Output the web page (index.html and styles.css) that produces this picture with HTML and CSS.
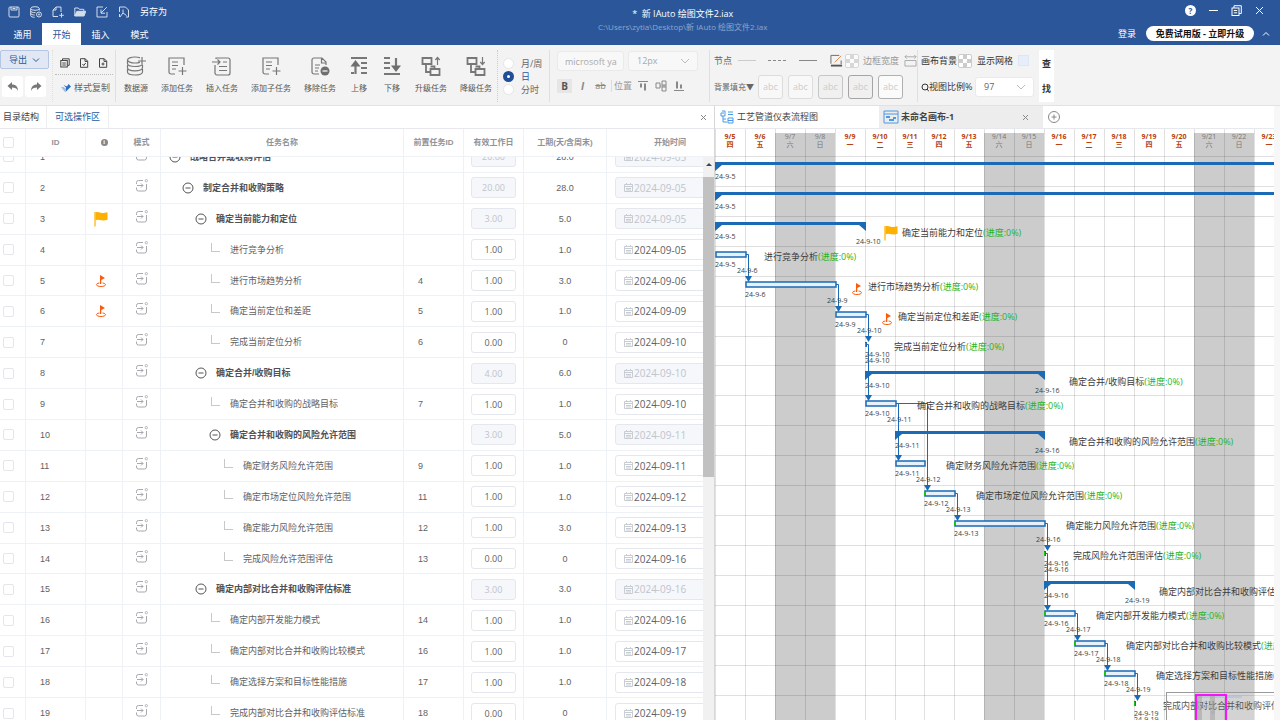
FILE: index.html
```
<!DOCTYPE html>
<html lang="zh-CN">
<head>
  <meta charset="UTF-8" />
  <meta name="viewport" content="width=device-width, initial-scale=1" />
  <title>新 IAuto 绘图文件2.iax</title>
  <link rel="stylesheet" href="styles.css">
</head>
<body>
  <header class="titlebar">
    <div class="title-left">
      <div class="quick">
        <button aria-label="保存"><svg viewBox="0 0 12 12"><rect x="1" y="1" width="10" height="10" rx="1"/><path d="M3 1v3h6V1M4.500 2.500h3"/></svg></button>
        <button aria-label="数据源设置"><svg viewBox="0 0 12 12"><ellipse cx="5" cy="2.500" rx="4.300" ry="1.800"/><path d="M.7 2.500v7c0 1 1.800 1.800 4 1.800M9.300 2.500v2M.7 5c0 1 2 1.800 4.800 1.600M.7 7.300c0 1 1.800 1.700 4 1.700"/><circle cx="9" cy="8.500" r="2.500"/><circle cx="9" cy="8.500" r=".7"/></svg></button>
        <button aria-label="新建"><svg viewBox="0 0 12 12"><path d="M6 10.500H1V4l3-3h5v5M4 1v3H1M9.500 7v4.500M7.200 9.300h4.600"/></svg></button>
        <button aria-label="打开"><svg viewBox="0 0 12 12"><path d="M.8 10V2h3.500l1 1.300h4.500V5" /><path class="solid" d="M.8 10 2.800 5.300h9L10 10z"/></svg></button>
        <button aria-label="导入"><svg viewBox="0 0 12 12"><path d="M7 1H1v10h10V6M10.800 1.200 5 7M5 3.500V7.200h4"/></svg></button>
        <button aria-label="导出PDF"><svg viewBox="0 0 12 12"><path d="M1.500 6V1h6l3 3v7H8M5 3.500v3.300L2 11M5 7l3.500 2.500M1.500 8v3"/></svg></button>
        <a href="#">另存为</a>
      </div>
      <nav class="menu">
        <a href="#">通用</a><a href="#" class="active">开始</a><a href="#">插入</a><a href="#">模式</a>
      </nav>
    </div>
    <div class="title-center">
      <div class="doc-name">*&nbsp; 新 IAuto 绘图文件2.iax</div>
      <div class="doc-path">C:\Users\zytia\Desktop\新 IAuto 绘图文件2.iax</div>
    </div>
    <div class="title-right">
      <div class="win">
        <button class="help" aria-label="帮助">?</button>
        <button aria-label="最小化"><svg viewBox="0 0 11 11"><path d="M1 5.500h9"/></svg></button>
        <button aria-label="还原"><svg viewBox="0 0 11 11"><rect x="1" y="3" width="7" height="7.500"/><path d="M3 3V.7h7.300V8.500H8M2.800 5.500h3.400M2.800 7.800h3.400"/></svg></button>
        <button aria-label="关闭"><svg viewBox="0 0 11 11"><path d="M2 2l7 7M9 2 2 9"/></svg></button>
      </div>
      <div class="account">
        <a href="#">登录</a>
        <button class="pill">免费试用版 - 立即升级</button>
        <button class="fold" aria-label="收起"><svg viewBox="0 0 8 8"><path d="M1 5.500 4 2.500l3 3"/></svg></button>
      </div>
    </div>
  </header>

  <div class="ribbon">
    <div class="group g-export">
      <button class="export">导出 <svg viewBox="0 0 8 8"><path d="M1 2.500 4 5.500l3-3"/></svg></button>
      <div class="history">
        <button aria-label="撤销"><svg viewBox="0 0 12 12"><path d="M5 1 .5 5 5 9V6.500c3 0 5 .5 6 3.500 0-4-2-6.500-6-6.500z"/></svg></button>
        <button aria-label="重做"><svg viewBox="0 0 12 12"><path d="M7 1l4.500 4L7 9V6.500c-3 0-5 .5-6 3.500 0-4 2-6.500 6-6.500z"/></svg></button>
      </div>
    </div>
    <div class="group g-clip">
      <div class="clip-icons">
        <button aria-label="复制"><svg viewBox="0 0 10 10"><rect x=".8" y="2.500" width="6.500" height="6.500"/><path d="M2.500 2.500V.8h6.700v6.500H7.300M2.300 5h3.500M2.300 7h3.500"/></svg></button>
        <button aria-label="剪切"><svg viewBox="0 0 10 10"><path d="M1.500.7h4.700l2.500 2.500v6.100H1.500zM6 .7v2.700h2.700M3.500 6l1.200 1.500L6.700 5"/></svg></button>
        <button aria-label="粘贴"><svg viewBox="0 0 10 10"><path d="M1.500.7h4.700l2.500 2.500v6.100H1.500zM6 .7v2.700h2.700M5 4.500v3M3.500 6h3"/></svg></button>
      </div>
      <button class="painter"><svg viewBox="0 0 11 10"><path fill="#2b6cc4" d="M2.500 2 5 4.500 4.500 9 10 3.500 7.500 1 6 3.500z"/><path fill="#9dbce6" d="M0 4h2.500L5 6 4 9z"/></svg>样式复制</button>
    </div>
    <div class="group g-tools">
      <button><svg viewBox="0 0 20 20"><ellipse cx="9" cy="4" rx="7.500" ry="3"/><path d="M1.500 4v3.500c0 1.700 3 3 7.500 3s7.500-1.300 7.500-3M1.500 9v2.800c0 1.700 3 3 7.500 3s7.500-1.300 7.500-3V9M1.500 13v3c0 1.700 3 3 7.500 3s7.500-1.300 7.500-3v-3"/><path stroke="#f3f3f3" stroke-width="4" d="M16 1v8"/><path d="M16 1v8M12 5h8"/></svg>数据源</button>
      <button><svg viewBox="0 0 20 20"><path d="M8 18H4a2 2 0 0 1-2-2V2h15v7M5 6h6M5 9.500h6M5 13h4M15.500 11v8M11.500 15h8"/></svg>添加任务</button>
      <button><svg viewBox="0 0 20 20"><path d="M4 3V2h12a2 2 0 0 1 2 2v13a2 2 0 0 1-2 2H5a2 2 0 0 1-2-2V9M0 6h8M5.500 3.500 8 6 5.500 8.500M11 6h4M7 10.500h8M7 14.500h8"/></svg>插入任务</button>
      <button><svg viewBox="0 0 20 20"><path d="M8 18H4a2 2 0 0 1-2-2V2h15v7M5 6h6M5 9.500h6M5 13h4M15.500 11v8M11.500 15h8"/></svg>添加子任务</button>
      <button><svg viewBox="0 0 20 20"><path d="M9 18H4a2 2 0 0 1-2-2V4a2 2 0 0 1 2-2h8l4 4v3M11.500 2v5H16M5 9h5M5 12h4M5 15h3"/><circle class="fill" cx="15" cy="15" r="4.500"/><path class="minus" d="M12.500 15h5"/></svg>移除任务</button>
      <button><svg class="bold" viewBox="0 0 20 20"><path d="M2 2h16M12 7h6M12 12h6M12 17h6M2 17h3M6.500 18V8"/><path class="fill" d="M1.500 10.500 6.500 4l5 6.500z"/></svg>上移</button>
      <button><svg class="bold" viewBox="0 0 20 20"><path d="M2 18h16M2 2h6M2 7h6M2 12h6M14 2v10"/><path class="fill" d="M9 9.500l5 6.500 5-6.500z"/></svg>下移</button>
      <button><svg viewBox="0 0 20 20"><path stroke-width="1.800" d="M1.500 2h9v6h-9zM9.500 13h9v6h-9zM5 8v8h4.500M9.500 10.500h4V13"/><path d="M16.500 9V2M14.300 4l2.200-2.500L18.700 4"/></svg>升级任务</button>
      <button><svg viewBox="0 0 20 20"><path stroke-width="1.800" d="M1.500 2h9v6h-9zM9.500 13h9v6h-9zM5 8v8h4.500M9.500 10.500h4V13"/><path d="M16.500 1v7M14.300 6l2.200 2.500L18.700 6"/></svg>降级任务</button>
    </div>
    <div class="group g-scale">
      <label><input type="radio" name="scale">月/周</label>
      <label><input type="radio" name="scale" checked>日</label>
      <label><input type="radio" name="scale">分时</label>
    </div>
    <div class="group g-font">
      <div class="row">
        <input class="font-name" type="text" value="microsoft yahei" aria-label="字体">
        <select class="drop font-size" aria-label="字号"><option>12px</option></select>
      </div>
      <div class="row format">
        <button class="fmt on"><b>B</b></button>
        <button class="fmt"><b><i>I</i></b></button>
        <button class="fmt strike">ab</button>
        <span class="pos">位置</span>
        <button class="fmt" aria-label="顶对齐"><svg viewBox="0 0 12 12"><path d="M1 1.500h10"/><path stroke-width="2" d="M4 3.500v4M8 3.500v7"/></svg></button>
        <button class="fmt" aria-label="居中"><svg viewBox="0 0 12 12"><path d="M1 3h4v5H1zM7 1h4v4H7zM7 7h4v4H7zM5 6h7"/></svg></button>
        <button class="fmt" aria-label="底对齐"><svg viewBox="0 0 12 12"><path d="M1 10.500h10"/><path stroke-width="2" d="M4 1.500v7M8 4.500v4"/></svg></button>
      </div>
    </div>
    <div class="group g-node">
      <div class="row">
        <span>节点</span>
        <button class="line thin" aria-label="细线"></button>
        <button class="line dashed" aria-label="虚线"></button>
        <button class="line" aria-label="实线"></button>
        <button class="sq pen" aria-label="边框颜色"><svg viewBox="0 0 14 14"><path d="M12 7v4M1 1.500h9M1 1.500v9"/><path stroke="#e8834a" d="M5 9l7-7"/><path stroke="#555" stroke-width="2" d="M1 12.500h12"/></svg></button>
        <button class="sq checker pale" aria-label="透明"></button>
        <span class="muted">边框宽度</span>
        <button class="sq" aria-label="宽度"><svg class="pale" viewBox="0 0 14 14"><path d="M1 3h12M3 1 1 3l2 2M11 1l2 2-2 2M1 7h12v6H1z"/></svg></button>
      </div>
      <div class="row fills">
        <span>背景填充▼</span>
        <button class="abc a1">abc</button>
        <button class="abc a2">abc</button>
        <button class="abc a3">abc</button>
        <button class="abc a4">abc</button>
        <button class="abc a5">abc</button>
      </div>
    </div>
    <div class="group g-view">
      <div class="row">
        <span>画布背景</span>
        <button class="sq checker" aria-label="画布背景"></button>
        <label class="grid-toggle">显示网格<input type="checkbox"></label>
      </div>
      <div class="row">
        <label class="ratio" for="ratio"><svg viewBox="0 0 8 9"><circle cx="4" cy="4" r="3"/><path d="M6 6l2 2.500"/></svg>视图比例%</label>
        <select id="ratio" class="drop ratio-select"><option>97</option></select>
      </div>
    </div>
    <button class="find"><span>查</span><span>找</span></button>
  </div>

  <main class="work">
    <section class="left">
      <div class="tabs">
        <a href="#" class="side-tab">目录结构</a>
        <a href="#" class="side-tab current">可选操作区</a>
        <button class="close" aria-label="关闭"><svg viewBox="0 0 11 11"><path d="M3 3l5 5M8 3 3 8"/></svg></button>
      </div>
      <table class="tasks head">
        <colgroup><col class="c1"><col class="c2"><col class="c3"><col class="c4"><col class="c5"><col class="c6"><col class="c7"><col class="c8"><col class="c9"></colgroup>
        <tr>
          <th><input type="checkbox" aria-label="全选"></th><th>ID</th><th><span class="info">i</span></th><th>模式</th><th>任务名称</th><th>前置任务ID</th><th>有效工作日</th><th>工期(天/含周末)</th><th>开始时间</th>
        </tr>
      </table>
      <div class="body-wrap">
        <div class="body-scroll" id="scroll">
          <table class="tasks body">
            <colgroup><col class="c1"><col class="c2"><col class="c3"><col class="c4"><col class="c5"><col class="c6"><col class="c7"><col class="c8"><col class="c9"></colgroup>
            <tbody id="rows"></tbody>
          </table>
        </div>
        <div class="scrollbar"><div class="up"></div><div class="thumb"></div></div>
      </div>
    </section>

    <section class="right">
      <div class="tabs">
        <a href="#" class="doc-tab">
          <svg viewBox="0 0 14 14"><path d="M4 3H1v3h4V1H2M3 6v6h4M3 9h3M8 2h5M8 4.500h5M8 8h5v5H8zM8 10.500h5"/></svg>工艺管道仪表流程图
        </a>
        <div class="doc-tab open">
          <svg viewBox="0 0 16 14"><path d="M1 1h14v12H1zM1 4h14"/><path stroke-width="2" d="M3 7h4M6 10h5M10 8h3"/></svg>未命名画布-1
          <button class="close" aria-label="关闭画布"><svg viewBox="0 0 11 11"><path d="M3 3l5 5M8 3 3 8"/></svg></button>
        </div>
        <button class="add" aria-label="新建画布"><svg viewBox="0 0 12 12"><circle cx="6" cy="6" r="5.500"/><path d="M6 3.500v5M3.500 6h5"/></svg></button>
      </div>
      <div class="canvas">
        <svg id="gantt" class="gantt"></svg>
        <div class="minimap">
          <svg viewBox="0 0 112 30"><path fill="#b9c6d8" d="M31 3h44v2H31zM36 8h2v3h-2zM40 12h4v3h-4zM44 18h4v3h-4z"/><path fill="#999" fill-opacity=".5" d="M30 3h5v27h-5zM43 3h5v27h-5z"/><path fill="none" stroke="#f0f" stroke-width="2" d="M29 32V2h30v30"/></svg>
        </div>
      </div>
    </section>
  </main>

  <svg class="defs">
    <symbol id="flag" viewBox="0 0 14 16"><path d="M1 1v14.500" stroke="#fdb000" stroke-width="1.200"/><path fill="#fdb000" stroke="none" d="M1.500 1.500c3-1.500 5 1 8 .5L13.500 1.300v7.500c-3 1.200-6 .6-8 .2-1.500-.3-3-.2-4 .5z"/></symbol>
    <symbol id="pin" viewBox="0 0 10 12"><path fill="#f95a0b" stroke="none" d="M4 0 9 3 5.300 5v4H4z"/><path fill="none" stroke="#f95a0b" d="M3.500 8C1 8.300.5 9 .5 9.700c0 1 2 1.800 4.500 1.800s4.500-.8 4.500-1.800c0-.7-.8-1.400-3-1.700"/></symbol>
    <symbol id="mode" viewBox="0 0 13 13"><path fill="none" stroke="#a5a8ad" d="M1.500 5V3.500a2 2 0 0 1 2-2H8M11.500 5v5a2 2 0 0 1-2 2h-6a2 2 0 0 1-2-2V8.500M2 6.500h6M6 4.500l2 2-2 2"/><circle cx="11.300" cy="1.700" r="1.200" fill="none" stroke="#a5a8ad" stroke-width=".8"/></symbol>
    <symbol id="cal" viewBox="0 0 9 9"><path fill="none" stroke="#c8ccd3" d="M.5 1.500h8v7h-8zM.5 3.500h8M2.500 0v2M6.500 0v2M2 5.500h5M2 7h5"/></symbol>
  </svg>

  <script src="script.js"></script>
</body>
</html>
```
FILE: styles.css
```
* { box-sizing: border-box; }
body { margin: 0; height: 100vh; display: flex; flex-direction: column; overflow: hidden; font: 9px/12px "Open Sans", "Noto Sans CJK SC", sans-serif; color: #444; background: #fff; }
a { color: inherit; text-decoration: none; }
button { font: inherit; color: inherit; background: none; border: 0; padding: 0; display: flex; align-items: center; justify-content: center; cursor: pointer; }
input, select { font: inherit; color: inherit; margin: 0; }
svg { fill: none; stroke: currentColor; display: block; }
.defs { display: none; }

/* title bar */
.titlebar { display: grid; grid-template-columns: 7fr auto 6fr; height: 45px; background: #2b579a; color: #fff; flex: none; }
.quick { display: flex; align-items: center; gap: 10px; height: 23px; padding-left: 8px; }
.quick svg { width: 12px; height: 12px; opacity: .8; }
.quick .solid { fill: #fff; }
.menu { display: flex; height: 22px; padding-left: 3px; }
.menu a { width: 39px; line-height: 23px; text-align: center; }
.menu .active { background: #fff; color: #2b579a; }
.title-center { padding-top: 8px; text-align: center; }
.doc-path { font-size: 8px; line-height: 14px; color: #8ba5cd; }
.win { display: flex; justify-content: flex-end; align-items: center; gap: 12px; height: 21px; padding-right: 15px; }
.win svg, .help { width: 11px; height: 11px; }
.help { background: #fff; color: #2b579a; border-radius: 50%; font-size: 8px; font-weight: bold; }
.account { display: flex; justify-content: flex-end; align-items: center; height: 25px; padding-right: 10px; }
.pill { width: 108px; height: 15px; margin: 0 8px 0 10px; border-radius: 8px; background: #fff; color: #111; font-weight: bold; white-space: nowrap; }
.fold svg { width: 8px; height: 8px; }

/* ribbon */
.ribbon { display: flex; height: 61px; padding: 5px 0 3px; background: #f3f3f3; border-bottom: 1px solid #e2e2e2; flex: none; color: #666; }
.group { border-right: 1px solid #e0e0e0; flex: none; }
.row { display: flex; align-items: center; }
.g-export { width: 53px; border-right-style: dotted; }
.export { width: 49px; height: 19px; gap: 5px; border: 1px solid #b3c6e4; border-radius: 2px; background: #e1e8f4; color: #2b579a; }
.export svg { width: 8px; height: 8px; }
.history { display: flex; gap: 2px; padding: 7px 0 0 2px; }
.history button { width: 21px; height: 21px; background: #fff; border-radius: 3px; }
.history svg { width: 12px; height: 12px; fill: #777; stroke: none; }
.g-clip { width: 63px; padding-left: 2px; }
.clip-icons { display: flex; gap: 9px; height: 25px; padding: 2px 0 0 5px; border-bottom: 1px dotted #bbb; color: #444; width: 58px; }
.clip-icons svg { width: 10px; height: 10px; }
.painter { gap: 2px; height: 25px; padding-left: 6px; }
.painter svg { width: 11px; height: 10px; stroke: none; }
.g-tools { display: flex; gap: 13px; padding: 6px 5px 0 8px; border-right: 1px dotted #ccc; }
.g-tools button { flex-direction: column; justify-content: flex-start; gap: 6px; font-size: 8px; line-height: 12px; color: #555; min-width: 20px; white-space: nowrap; }
.g-tools svg { width: 20px; height: 20px; stroke: #777; stroke-width: 1.2; }
.g-tools .bold { stroke-width: 2.2; }
.g-tools .fill { fill: #6e6e6e; stroke: none; }
.g-tools .minus { stroke: #fff; }
.g-scale { width: 52px; padding: 7px 0 0 5px; }
.g-scale label { display: flex; align-items: center; gap: 7px; height: 13px; }
.g-scale label:has(:checked) { color: #2b579a; }
.g-scale input { appearance: none; width: 11px; height: 11px; border: 1px solid #e6e6e6; border-radius: 50%; background: #fff; }
.g-scale input:checked { border: 4px solid #1f4f99; }
.g-font { width: 160px; padding: 1px 0 0 7px; color: #999; }
.font-name { width: 67px; height: 20px; padding: 0 6px 0 7px; border: 1px solid #eaeaea; border-radius: 3px; background: #f8f8f8; font-size: 9px; color: #aaa; }
.drop { appearance: none; height: 20px; padding: 0 8px; border: 1px solid #eaeaea; border-radius: 3px; font-size: 9px; background: #f8f8f8 url('data:image/svg+xml,<svg xmlns="http://www.w3.org/2000/svg" width="8" height="6"><path d="M0 1l4 4 4-4" fill="none" stroke="%23bbb"/></svg>') no-repeat right 8px center; }
.font-size { width: 70px; margin-left: 4px; color: #aaa; }
.format { height: 30px; gap: 3px; }
.fmt { width: 15px; height: 14px; color: #888; }
.fmt.on { background: #e6e6e6; color: #555; }
.fmt b { font-size: 10px; }
.fmt svg { width: 12px; height: 12px; }
.strike { text-decoration: line-through; }
.pos { padding-left: 2px; border-left: 1px solid #ddd; white-space: nowrap; }
.g-node { width: 208px; padding-left: 4px; }
.g-node .row, .g-view .row { height: 21px; }
.line { width: 18px; height: 1px; margin-left: 6px; background: #888; }
.line.thin { background: #ccc; }
.line.dashed { margin: 0 7px 0 12px; background: none; border-top: 1px dashed #888; }
.sq { width: 14px; height: 14px; }
.sq svg { width: 13px; height: 13px; }
.sq .pale { color: #aaa; }
.pen { margin: 0 2px 0 12px; }
.checker { border: 1px solid #ccc; border-radius: 2px; background: conic-gradient(#ccc 25%, #fff 0 50%, #ccc 0 75%, #fff 0) 0 0 / 8px 8px; }
.checker.pale { opacity: .7; }
.muted { margin: 0 4px; color: #999; }
.g-node .fills, .g-view .row + .row { height: 32px; }
.fills span { width: 44px; white-space: nowrap; font-size: 8px; }
.abc { width: 25px; height: 24px; margin-right: 5px; border: 1px solid #ddd; border-radius: 3px; background: #f8f8f8; color: #ccc; font-size: 9px; }
.a3 { background: #f0f0f0; border-color: #c6c6c6; }
.a4 { background: #f0f0f0; border-color: #a5a5a5; }
.a5 { background: #fbfbfb; border-color: #b0b0b0; }
.g-view { width: 121px; padding-left: 3px; color: #333; border-right: 0; }
.g-view .checker { margin: 0 5px 0 1px; flex: none; }
.grid-toggle { display: flex; align-items: center; gap: 5px; white-space: nowrap; }
.grid-toggle input { appearance: none; width: 11px; height: 11px; background: #e8eef9; border: 1px solid #dde6f6; }
.ratio { display: flex; align-items: center; width: 54px; white-space: nowrap; }
.ratio svg { width: 8px; height: 9px; }
.ratio-select { width: 59px; background-color: #fff; color: #666; }
.find { flex-direction: column; gap: 13px; width: 15px; background: #fff; color: #333; font-weight: bold; }

/* work area */
.work { flex: 1; display: flex; min-height: 0; }
.left { flex: 0 0 715px; display: flex; flex-direction: column; overflow: hidden; border-right: 1px solid #d8d8d8; }
.right { flex: 1; min-width: 0; display: flex; flex-direction: column; border-right: 6px solid #f7f7f7; }
.tabs { display: flex; align-items: center; height: 23px; border-bottom: 1px solid #e6e8ee; flex: none; }
.side-tab { padding: 0 7px 0 3px; line-height: 22px; border-right: 1px solid #eee; }
.side-tab.current { padding: 0 8px; color: #2b579a; }
.close svg { width: 11px; height: 11px; stroke: #888; }
.left .close { margin-left: auto; margin-right: 5px; }
.doc-tab { display: flex; align-items: center; gap: 3px; width: 164px; height: 22px; padding: 0 12px 0 5px; white-space: nowrap; }
.doc-tab > svg { width: 14px; height: 14px; stroke: #4a9ae8; }
.doc-tab.open { gap: 2px; padding-left: 4px; background: #ededed; font-weight: bold; color: #444; }
.doc-tab.open > svg { width: 16px; }
.doc-tab .close { margin-left: auto; }
.add { margin-left: 5px; }
.add svg { width: 12px; height: 12px; stroke: #888; }

/* task table */
.tasks { width: 734px; table-layout: fixed; border-collapse: separate; border-spacing: 0; font-family: "Liberation Sans", "Noto Sans CJK SC", sans-serif; color: #606266; }
.tasks td, .tasks th { padding: 0; border-right: 1px solid #eef1f6; border-bottom: 1px solid #eef1f6; }
.c1 { width: 26px; } .c2 { width: 60px; } .c3 { width: 37px; } .c4 { width: 38px; } .c5 { width: 243px; }
.c6 { width: 60px; } .c7 { width: 60px; } .c8 { width: 83px; } .c9 { width: 127px; }
.head { flex: none; height: 28px; font-size: 8px; color: #909399; }
.tasks.body { height: 587px; }
.tasks input[type=checkbox] { appearance: none; display: block; width: 11px; height: 11px; margin-left: 3px; border: 1px solid #e4e6ea; border-radius: 2px; background: #fff; }
.info { display: block; width: 7px; height: 7px; margin: auto; border-radius: 50%; background: #85878c; color: #fff; font: bold 6px/7px "Liberation Serif", serif; }
.body-wrap { flex: 1; display: flex; min-height: 0; }
.body-scroll { flex: 1; min-width: 0; overflow: hidden; }
.tasks .num { padding-left: 14px; }
.mark svg { margin-left: 8px; }
.mark .flag { width: 14px; height: 16px; }
.mark .pin { width: 14px; height: 12px; }
.mode svg { width: 13px; height: 13px; margin: 0 auto 5px; }
.name { display: flex; align-items: center; gap: 9px; white-space: nowrap; }
.lv0 { padding-left: 8px; } .lv1 { padding-left: 21px; } .lv2 { padding-left: 34px; } .lv3 { padding-left: 48px; } .lv4 { padding-left: 61px; }
.toggle { width: 12px; height: 12px; }
.toggle svg { width: 12px; height: 12px; stroke: #555; }
.leaf { width: 12px; height: 14px; }
.leaf::before { content: ""; display: block; width: 8px; height: 8px; margin-left: 2px; border: solid #c8c8c8; border-width: 0 0 1px 1px; }
.sum .name { font-weight: bold; color: #505257; }
.days { display: block; width: 45px; height: 21px; margin: auto; padding: 0; text-align: center; }
.days, .date { border: 1px solid #e4e7ed; border-radius: 3px; background: #fff; font: 10px/12px "Open Sans", sans-serif; }
.days { font-size: 9px; }
.dur { text-align: center; }
.date { display: flex; align-items: center; gap: 1px; height: 21px; margin-left: 8px; padding-left: 8px; }
.date svg { width: 9px; height: 9px; }
.date input { width: 60px; padding: 0; border: 0; background: none; }
.days:disabled, .date:has(:disabled) { background: #f5f7fa; color: #c0c4cc; }
.scrollbar { width: 11px; background: #f1f1f1; }
.up { height: 20px; padding: 6px 3px; }
.up::before { content: ""; display: block; border: solid transparent; border-width: 0 3px 3px; border-bottom-color: #444; }
.thumb { height: 300px; background: #c1c1c1; }

/* gantt */
.canvas { flex: 1; position: relative; min-height: 0; overflow: hidden; }
.gantt { width: 100%; height: 100%; stroke: none; }
.gantt text { font-size: 9px; fill: #3c3c3c; }
.gantt .small { font-size: 7px; }
.gantt .work-day { font-size: 7px; font-weight: bold; fill: #b8400f; text-anchor: middle; }
.gantt .off-day { font-size: 7px; fill: #777; text-anchor: middle; }
.gantt .done { fill: #1fb41f; }
.gantt .grid { stroke: #000; stroke-opacity: .12; }
.gantt .bar { fill: #e6f1fb; stroke: #1b6ab5; stroke-width: 1.5; }
.gantt .solid { fill: #1b6ab5; }
.gantt .link { fill: none; stroke: #1b6ab5; }
.gantt .start { fill: #17c317; }
.gantt .weekend { fill: #ccc; }
.minimap { position: absolute; right: -4px; bottom: 0; width: 112px; height: 28px; border: solid #999; border-width: 1px 1px 0; background: rgba(255, 255, 255, .15); }
.minimap svg { width: 112px; height: 30px; stroke: none; opacity: .9; }
```
FILE: script.js
```
// id, level, name, predecessor, work days, duration, start date, mark
const tasks = [
  [1, 0, '战略合并或收购评估', '', '20.00', '28.0', '2024-09-05'],
  [2, 1, '制定合并和收购策略', '', '20.00', '28.0', '2024-09-05'],
  [3, 2, '确定当前能力和定位', '', '3.00', '5.0', '2024-09-05', 'flag'],
  [4, 3, '进行竞争分析', '', '1.00', '1.0', '2024-09-05'],
  [5, 3, '进行市场趋势分析', '4', '1.00', '3.0', '2024-09-06', 'pin'],
  [6, 3, '确定当前定位和差距', '5', '1.00', '1.0', '2024-09-09', 'pin'],
  [7, 3, '完成当前定位分析', '6', '0.00', '0', '2024-09-10'],
  [8, 2, '确定合并/收购目标', '', '4.00', '6.0', '2024-09-10'],
  [9, 3, '确定合并和收购的战略目标', '7', '1.00', '1.0', '2024-09-10'],
  [10, 3, '确定合并和收购的风险允许范围', '', '3.00', '5.0', '2024-09-11'],
  [11, 4, '确定财务风险允许范围', '9', '1.00', '1.0', '2024-09-11'],
  [12, 4, '确定市场定位风险允许范围', '11', '1.00', '1.0', '2024-09-12'],
  [13, 4, '确定能力风险允许范围', '12', '1.00', '3.0', '2024-09-13'],
  [14, 4, '完成风险允许范围评估', '13', '0.00', '0', '2024-09-16'],
  [15, 2, '确定内部对比合并和收购评估标准', '', '3.00', '3.0', '2024-09-16'],
  [16, 3, '确定内部开发能力模式', '14', '1.00', '1.0', '2024-09-16'],
  [17, 3, '确定内部对比合并和收购比较模式', '16', '1.00', '1.0', '2024-09-17'],
  [18, 3, '确定选择方案和目标性能措施', '17', '1.00', '1.0', '2024-09-18'],
  [19, 3, '完成内部对比合并和收购评估标准', '18', '0.00', '0', '2024-09-19']
];
const summaries = [1, 2, 3, 8, 10, 15];
// [from, to] dependency arrows
const links = [[4, 5], [5, 6], [6, 7], [7, 9], [9, 11], [9, 12], [12, 13], [13, 14], [14, 16], [16, 17], [17, 18], [18, 19]];

const icon = name => `<svg class="${name}"><use href="#${name}"/></svg>`;

document.getElementById('rows').innerHTML = tasks.map(([id, lv, name, pre, days, dur, date, mark]) => {
  const sum = summaries.includes(id);
  const off = sum ? 'disabled' : '';
  const knob = sum
    ? '<button class="toggle" aria-label="折叠"><svg viewBox="0 0 12 12"><circle cx="6" cy="6" r="5"/><path d="M3.500 6h5"/></svg></button>'
    : '<span class="leaf"></span>';
  return `<tr class="${sum ? 'sum' : ''}">
    <td><input type="checkbox" aria-label="选择 ${id}"></td>
    <td class="num">${id}</td>
    <td class="mark">${mark ? icon(mark) : ''}</td>
    <td class="mode">${icon('mode')}</td>
    <td><div class="name lv${lv}">${knob}${name}</div></td>
    <td class="num">${pre}</td>
    <td><input class="days" type="text" value="${days}" aria-label="有效工作日" ${off}></td>
    <td class="dur">${dur}</td>
    <td><label class="date">${icon('cal')}<input type="text" value="${date}" aria-label="开始时间" ${off}></label></td>
  </tr>`;
}).join('');
document.getElementById('scroll').scrollTop = 15;

// chart geometry at 97% zoom
const CELL = 29.92;
const TOP = 27;
const at = n => Math.round(n * CELL);
const week = ['日', '一', '二', '三', '四', '五', '六'];
const shortDate = n => `24-9-${5 + n}`;
let out = '';

// day headings and weekend shading
for (let i = 0; i < 26; i++) {
  const d = new Date(2024, 8, 5 + i);
  const off = d.getDay() % 6 === 0;
  const cls = off ? 'off-day' : 'work-day';
  if (off) out += `<rect class="weekend" x="${at(i)}" y="4" width="${at(i + 1) - at(i)}" height="1200"/>`;
  out += `<text class="${cls}" x="${at(i) + 15}" y="10">${d.getMonth() + 1}/${d.getDate()}</text>`;
  out += `<text class="${cls}" x="${at(i) + 15}" y="18">${week[d.getDay()]}</text>`;
}

for (let i = 0; i < 40; i++) {
  out += `<path class="grid" d="M${at(i) + .5} 0V1200M0 ${TOP + at(i) + .5}H1600"/>`;
}

const bars = tasks.map(([id, , name, , , dur, date, mark], i) => {
  const from = Number(date.slice(-2)) - 5;
  return { id, name, mark, from, to: from + Number(dur), y: TOP + 9 + at(i), sum: summaries.includes(id) };
});

links.forEach(([a, b]) => {
  const p = bars[a - 1], q = bars[b - 1];
  const x1 = at(p.to) + 1;
  const x = (b === 12 ? at(q.from) : at(p.to)) + 3;
  out += `<path class="link" d="M${x1} ${p.y - .5}H${x + .5}V${q.y - 5}"/>`;
  out += `<path class="solid" d="M${x - 3} ${q.y - 9}h7l-3.500 6z"/>`;
});

bars.forEach(b => {
  const x1 = at(b.from), x2 = at(b.to), y = b.y;
  const zero = b.from === b.to;
  const labelGap = b.mark === 'flag' ? 37 : b.mark ? 33 : b.sum ? 25 : zero ? 29 : b.id === 4 ? 19 : 22;
  if (b.sum) {
    out += `<path class="solid" d="M${x1} ${y - 3}H${x2 + 1}v9l-7-6H${x1 + 7}L${x1} ${y + 6}z"/>`;
    out += `<text class="small" x="${x1}" y="${y + 14}">${shortDate(b.from)}</text>`;
    out += `<text class="small" x="${x2 - 9}" y="${y + 19}">${shortDate(b.to)}</text>`;
  } else {
    if (zero) {
      out += `<rect class="solid" x="${x1}" y="${y - 3}" width="2" height="5"/>`;
    } else {
      out += `<rect class="bar" x="${x1 + 1}" y="${y - 3}" width="${x2 - x1}" height="5"/>`;
    }
    out += `<rect class="start" x="${x1}" y="${y - 2}" width="1" height="4"/>`;
    out += `<text class="small" x="${x1}" y="${y + 12}">${shortDate(b.from)}</text>`;
    out += `<text class="small" x="${zero ? x2 : x2 - 8}" y="${y + 18}">${shortDate(b.to)}</text>`;
  }
  if (b.mark === 'flag') out += `<use href="#flag" x="${x2 + 19}" y="${y}" width="14" height="16"/>`;
  if (b.mark === 'pin') out += `<use href="#pin" x="${x2 + 17}" y="${y - 2}" width="10" height="12"/>`;
  out += `<text x="${x2 + labelGap}" y="${b.sum ? y + 11 : y + 5}">${b.name}<tspan class="done">(进度:0%)</tspan></text>`;
});
document.getElementById('gantt').innerHTML = out;
```
